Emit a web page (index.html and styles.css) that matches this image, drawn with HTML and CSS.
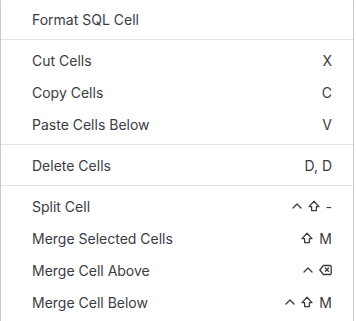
FILE: index.html
```html
<!DOCTYPE html>
<html lang="en">
<head>
  <meta charset="UTF-8">
  <title>Cell Menu</title>
  <link rel="stylesheet" href="styles.css">
</head>
<body>
  <div class="menu">
    <div class="item"><span>Format SQL Cell</span></div>
    <div class="sep"></div>
    <div class="item"><span>Cut Cells</span><span class="keys">X</span></div>
    <div class="item"><span>Copy Cells</span><span class="keys">C</span></div>
    <div class="item"><span>Paste Cells Below</span><span class="keys">V</span></div>
    <div class="sep"></div>
    <div class="item"><span>Delete Cells</span><span class="keys">D, D</span></div>
    <div class="sep"></div>
    <div class="item">
      <span>Split Cell</span>
      <span class="keys">
        <svg class="ic" width="10" height="10" viewBox="0 0 10 10"><polyline points="1,7 5,3 9,7"/></svg>
        <svg class="ic" width="12" height="12" viewBox="0 0 12 12"><path d="M6 1.3 L11 6.6 H8.4 V10.6 H3.6 V6.6 H1 Z"/></svg>
        <span>-</span>
      </span>
    </div>
    <div class="item">
      <span>Merge Selected Cells</span>
      <span class="keys">
        <svg class="ic" width="12" height="12" viewBox="0 0 12 12"><path d="M6 1.3 L11 6.6 H8.4 V10.6 H3.6 V6.6 H1 Z"/></svg>
        <span>M</span>
      </span>
    </div>
    <div class="item">
      <span>Merge Cell Above</span>
      <span class="keys">
        <svg class="ic" width="10" height="10" viewBox="0 0 10 10"><polyline points="1,7 5,3 9,7"/></svg>
        <svg class="ic" width="13" height="12" viewBox="0 0 13 12"><path d="M4.4 1.5 H11.2 Q12.2 1.5 12.2 2.5 V9.5 Q12.2 10.5 11.2 10.5 H4.4 L0.8 6 Z"/><path d="M6.4 4 L9.6 7.4 M9.6 4 L6.4 7.4"/></svg>
      </span>
    </div>
    <div class="item">
      <span>Merge Cell Below</span>
      <span class="keys">
        <svg class="ic" width="10" height="10" viewBox="0 0 10 10"><polyline points="1,7 5,3 9,7"/></svg>
        <svg class="ic" width="12" height="12" viewBox="0 0 12 12"><path d="M6 1.3 L11 6.6 H8.4 V10.6 H3.6 V6.6 H1 Z"/></svg>
        <span>M</span>
      </span>
    </div>
  </div>
</body>
</html>
```

FILE: styles.css
```css
/* Global */
body {
  margin: 0;
  background: #ffffff;
  font-family: Inter, "Noto Sans", Arial, sans-serif;
  color: #3b3b45;
  overflow: hidden;
}

/* Menu box */
.menu {
  width: 352px;
  margin-top: -4px;
  padding: 6px 0 12px;
  background: #ffffff;
  border: 1px solid #c9c9ce;
  border-radius: 6px;
}

.item {
  display: flex;
  justify-content: space-between;
  align-items: center;
  height: 32px;
  padding: 0 21px 0 31px;
  font-size: 14px;
}

.sep {
  height: 1px;
  margin: 4px 0;
  background: #e2e2e6;
}

/* Shortcut keys */
.keys {
  display: flex;
  align-items: center;
  gap: 6px;
}

.ic {
  fill: none;
  stroke: #3b3b45;
  stroke-width: 1.3;
  stroke-linejoin: round;
  stroke-linecap: round;
}
```
